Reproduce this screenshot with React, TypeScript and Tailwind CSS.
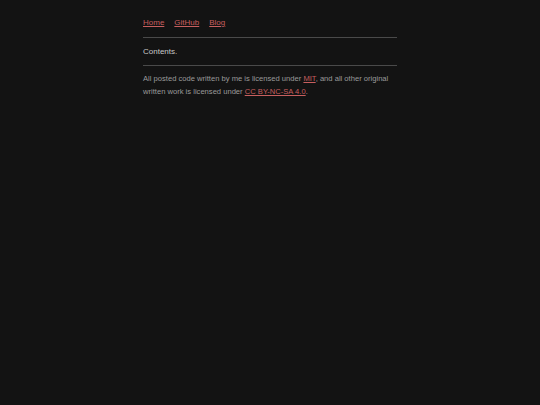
export default function App() {
  return (
    <div
      className="min-h-[405px] bg-[#131313] text-[8px] leading-[13px] text-[#9a9a9a]"
      style={{ fontFamily: '"Liberation Sans", Arial, sans-serif' }}
    >
      <div className="mx-auto w-[254px] pt-[16px]">
        <nav className="flex gap-[10px]">
          <a href="#" className="text-[#c75f5f] underline">Home</a>
          <a href="#" className="text-[#c75f5f] underline">GitHub</a>
          <a href="#" className="text-[#c75f5f] underline">Blog</a>
        </nav>
        <hr className="mt-[8px] border-t border-[#4a4a4a]" />
        <main className="py-[7px] text-[#c8c8c8]">
          <p>Contents.</p>
        </main>
        <hr className="border-t border-[#4a4a4a]" />
        <footer className="pt-[6px] text-[7.6px]">
          <p>
            All posted code written by me is licensed under{' '}
            <a href="#" className="text-[#c75f5f] underline">MIT</a>, and all other original
            written work is licensed under{' '}
            <a href="#" className="text-[#c75f5f] underline">CC BY-NC-SA 4.0</a>.
          </p>
        </footer>
      </div>
    </div>
  );
}
